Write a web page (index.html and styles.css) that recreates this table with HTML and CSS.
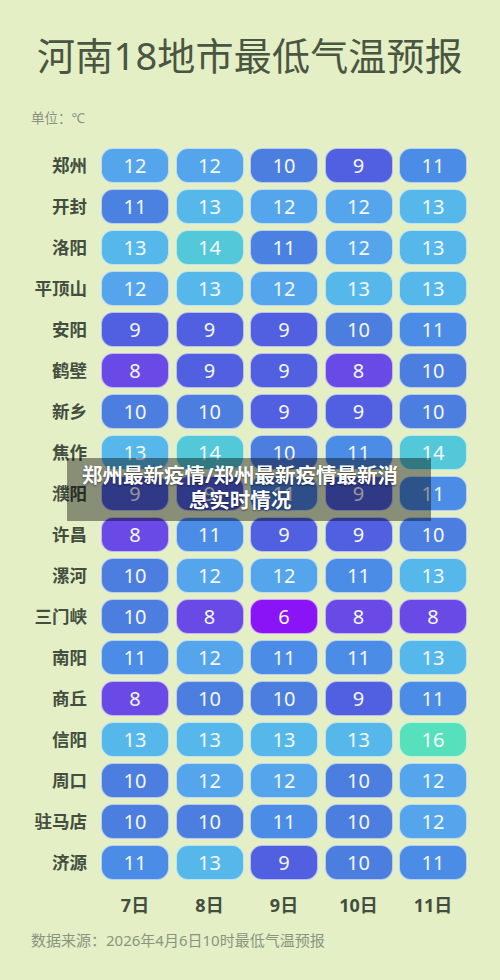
FILE: index.html
```html
<!DOCTYPE html>
<html lang="zh-CN">
<head>
    <meta charset="UTF-8">
    <meta name="viewport" content="width=device-width, initial-scale=1.0">
    <title>河南18地市最低气温预报</title>
    <link rel="stylesheet" href="styles.css">
</head>
<body>
    <h1 class="title">河南18地市最低气温预报</h1>
    <div class="unit">单位：℃</div>

    <div class="forecast">
        <div class="city">郑州</div>
        <div class="cell t12">12</div><div class="cell t12">12</div><div class="cell t10">10</div><div class="cell t9">9</div><div class="cell t11">11</div>

        <div class="city">开封</div>
        <div class="cell t11b">11</div><div class="cell t13">13</div><div class="cell t12">12</div><div class="cell t12">12</div><div class="cell t13">13</div>

        <div class="city">洛阳</div>
        <div class="cell t13">13</div><div class="cell t14">14</div><div class="cell t11b">11</div><div class="cell t12">12</div><div class="cell t13">13</div>

        <div class="city">平顶山</div>
        <div class="cell t12">12</div><div class="cell t13">13</div><div class="cell t12">12</div><div class="cell t13">13</div><div class="cell t13">13</div>

        <div class="city">安阳</div>
        <div class="cell t9">9</div><div class="cell t9">9</div><div class="cell t9">9</div><div class="cell t10">10</div><div class="cell t11">11</div>

        <div class="city">鹤壁</div>
        <div class="cell t8">8</div><div class="cell t9">9</div><div class="cell t9">9</div><div class="cell t8">8</div><div class="cell t10">10</div>

        <div class="city">新乡</div>
        <div class="cell t10">10</div><div class="cell t10">10</div><div class="cell t9">9</div><div class="cell t9">9</div><div class="cell t10">10</div>

        <div class="city">焦作</div>
        <div class="cell t13">13</div><div class="cell t14">14</div><div class="cell t10">10</div><div class="cell t11">11</div><div class="cell t14">14</div>

        <div class="city">濮阳</div>
        <div class="cell t9">9</div><div class="cell t9">9</div><div class="cell t11b">11</div><div class="cell t9">9</div><div class="cell t11">11</div>

        <div class="city">许昌</div>
        <div class="cell t8">8</div><div class="cell t11">11</div><div class="cell t9">9</div><div class="cell t9">9</div><div class="cell t10">10</div>

        <div class="city">漯河</div>
        <div class="cell t10">10</div><div class="cell t12">12</div><div class="cell t12">12</div><div class="cell t11">11</div><div class="cell t13">13</div>

        <div class="city">三门峡</div>
        <div class="cell t10">10</div><div class="cell t8">8</div><div class="cell t6">6</div><div class="cell t8">8</div><div class="cell t8">8</div>

        <div class="city">南阳</div>
        <div class="cell t11">11</div><div class="cell t12">12</div><div class="cell t11">11</div><div class="cell t11">11</div><div class="cell t13">13</div>

        <div class="city">商丘</div>
        <div class="cell t8">8</div><div class="cell t10">10</div><div class="cell t10">10</div><div class="cell t9">9</div><div class="cell t11">11</div>

        <div class="city">信阳</div>
        <div class="cell t13">13</div><div class="cell t13">13</div><div class="cell t13">13</div><div class="cell t13">13</div><div class="cell t16">16</div>

        <div class="city">周口</div>
        <div class="cell t10">10</div><div class="cell t12">12</div><div class="cell t12">12</div><div class="cell t10">10</div><div class="cell t12">12</div>

        <div class="city">驻马店</div>
        <div class="cell t10">10</div><div class="cell t10">10</div><div class="cell t11">11</div><div class="cell t10">10</div><div class="cell t12">12</div>

        <div class="city">济源</div>
        <div class="cell t11">11</div><div class="cell t13">13</div><div class="cell t9">9</div><div class="cell t10">10</div><div class="cell t11">11</div>

        <div></div>
        <div class="day">7日</div><div class="day">8日</div><div class="day">9日</div><div class="day">10日</div><div class="day">11日</div>
    </div>

    <div class="source">数据来源：2026年4月6日10时最低气温预报</div>

    <div class="caption">郑州最新疫情/郑州最新疫情最新消息实时情况</div>
</body>
</html>
```

FILE: styles.css
```css
body {
    font-family: "Noto Sans", "Noto Sans CJK SC", sans-serif;
    background-color: #e4efc6;
    margin: 0;
    padding: 32px 0 0 0;
    width: 500px;
    height: 980px;
    box-sizing: border-box;
    position: relative;
    overflow: hidden;
}
.title {
    margin: 0;
    font-size: 38px;
    font-weight: 400;
    line-height: 46px;
    color: #4a5542;
    text-align: center;
    letter-spacing: 0.2px;
}
.unit {
    margin: 30px 0 0 31px;
    font-size: 13.5px;
    line-height: 20px;
    color: #8a9480;
}
.forecast {
    display: grid;
    grid-template-columns: 64.5px repeat(5, 68px);
    grid-auto-rows: 35px;
    column-gap: 6.5px;
    row-gap: 6px;
    margin: 20px 0 0 30px;
}
.city {
    font-size: 17.5px;
    font-weight: 700;
    color: #434e3f;
    text-align: right;
    line-height: 35px;
    white-space: nowrap;
    margin-right: 7.5px;
}
.cell {
    border-radius: 12px;
    border: 1px solid rgba(255, 255, 255, 0.6);
    box-sizing: border-box;
    color: #f6f8ff;
    font-size: 20px;
    line-height: 33px;
    text-align: center;
}
.t6 { background: #8a14f5; }
.t8 { background: #6a4ae6; }
.t9 { background: #5060e0; }
.t10 { background: #4c7ee0; }
.t11 { background: #4a8ce6; }
.t11b { background: #4b82e2; }
.t12 { background: #55a5ec; }
.t13 { background: #56b8ea; }
.t14 { background: #52c8d8; }
.t16 { background: #56e0bc; }
.day {
    margin-top: 7px;
    font-size: 18px;
    font-weight: 700;
    color: #434e3f;
    text-align: center;
    line-height: 24px;
}
.source {
    margin: 9px 0 0 31px;
    font-size: 15px;
    line-height: 20px;
    color: #8a9480;
}
.caption {
    position: absolute;
    left: 67px;
    top: 458px;
    width: 364px;
    height: 63px;
    box-sizing: border-box;
    padding: 5px 26px 0 8px;
    background: rgba(0, 0, 0, 0.4);
    color: #fff;
    font-size: 20.5px;
    font-weight: 700;
    line-height: 25px;
    text-align: center;
    text-shadow: 0 1px 2px rgba(0, 0, 0, 0.5);
}
```
